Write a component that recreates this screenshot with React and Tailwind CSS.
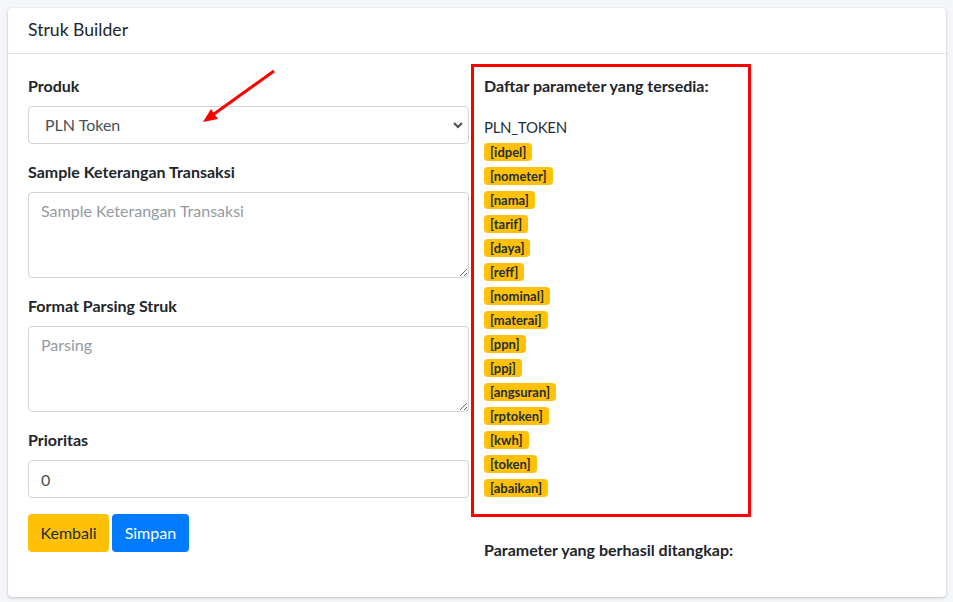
import React from "react";

const params = ["idpel","nometer","nama","tarif","daya","reff","nominal","materai","ppn","ppj","angsuran","rptoken","kwh","token","abaikan"];

function Label({ children }) {
  return <div className="text-[16px] leading-[24px] font-bold text-[#212529] mb-2">{children}</div>;
}

export default function App() {
  return (
    <div className="relative min-h-screen bg-[#f4f6f9] pl-2 pr-[7px] pt-2" style={{ fontFamily: "Lato, 'Liberation Sans', sans-serif" }}>
      <div className="bg-white rounded-[4px] shadow-[0_0_1px_rgba(0,0,0,0.125),0_1px_3px_rgba(0,0,0,0.2)]">
        <div className="h-[46px] border-b border-[#dee2e6] flex items-center px-5 pb-[1px]">
          <div className="text-[17.6px] text-[#212529]">Struk Builder</div>
        </div>
        <div className="p-5 grid grid-cols-[441px_1fr] gap-[15px]">
          <div>
            <Label>Produk</Label>
            <div className="relative mb-4">
              <select className="w-full h-[38px] appearance-none border border-[#ced4da] rounded-[4px] pl-4 pr-8 text-[16px] text-[#495057] bg-white outline-none" defaultValue="pln">
                <option value="pln">PLN Token</option>
              </select>
              <svg className="absolute right-[6px] top-[15px] pointer-events-none" width="10" height="8" viewBox="0 0 10 8">
                <path d="M1 2 L5 6 L9 2" fill="none" stroke="#4b4f54" strokeWidth="2" />
              </svg>
            </div>
            <Label>Sample Keterangan Transaksi</Label>
            <textarea className="block w-full h-[86px] mb-4 border border-[#ced4da] rounded-[4px] px-3 py-[6px] text-[16px] leading-[24px] text-[#495057] placeholder:text-[#939ba2] outline-none" placeholder="Sample Keterangan Transaksi" />
            <Label>Format Parsing Struk</Label>
            <textarea className="block w-full h-[86px] mb-4 border border-[#ced4da] rounded-[4px] px-3 py-[6px] text-[16px] leading-[24px] text-[#495057] placeholder:text-[#939ba2] outline-none" placeholder="Parsing" />
            <Label>Prioritas</Label>
            <input className="block w-full h-[38px] mb-4 border border-[#ced4da] rounded-[4px] px-3 text-[16px] text-[#495057] outline-none" defaultValue="0" />
            <div className="flex gap-[3px]">
              <button className="h-[38px] px-[12.5px] rounded-[4px] bg-[#ffc107] text-[#1f2d3d] text-[16px]">Kembali</button>
              <button className="h-[38px] px-[12.5px] rounded-[4px] bg-[#007bff] text-white text-[16px]">Simpan</button>
            </div>
          </div>
          <div className="relative">
            <div className="absolute left-[-13px] top-[-10px] w-[280px] h-[453px] border-[3px] border-[#ff0000] pointer-events-none" />
            <div className="text-[16px] leading-[24px] font-bold text-[#212529]">Daftar parameter yang tersedia:</div>
            <div className="mt-[17px] text-[15px] leading-[24px] tracking-[-0.3px] text-[#1f2d3d]">PLN_TOKEN</div>
            {params.map((p) => (
              <div key={p} className="h-[24px] flex items-start pt-[4px]">
                <span className="inline-block rounded-[4px] bg-[#ffc107] text-[#1f2d3d] text-[13px] leading-[12px] font-bold px-[6px] py-[3px]">[{p}]</span>
              </div>
            ))}
            <div className="mt-[39px] mb-[15px] text-[16px] leading-[24px] font-bold text-[#212529]">Parameter yang berhasil ditangkap:</div>
          </div>
        </div>
      </div>
      <svg className="absolute left-0 top-0 pointer-events-none" width="953" height="602">
        <line x1="274" y1="71" x2="214" y2="114" stroke="#ff0000" strokeWidth="3" />
        <polygon points="203,122 218,119 211,109" fill="#ff0000" />
      </svg>
    </div>
  );
}
